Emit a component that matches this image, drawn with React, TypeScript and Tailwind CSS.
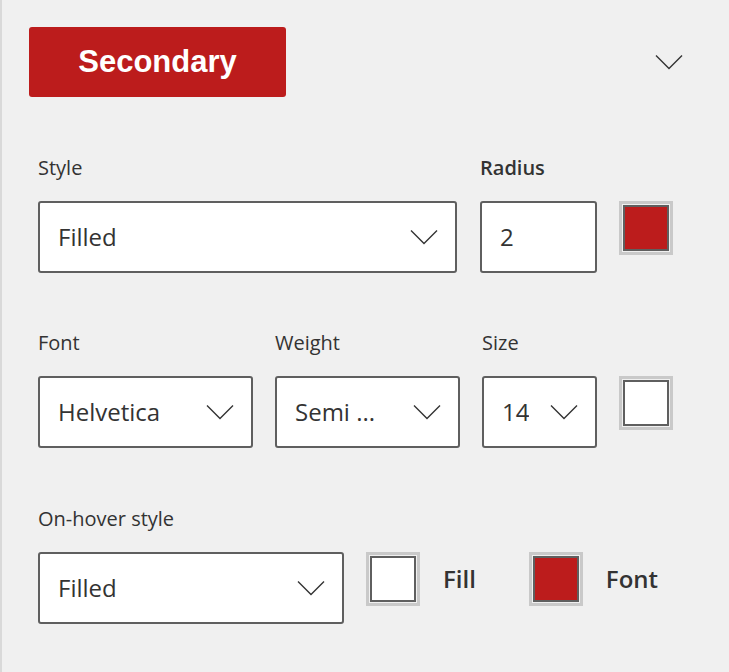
import type { ReactNode } from 'react';

const RED = '#bc1c1c';

function Chevron({ className = '' }: { className?: string }) {
  return (
    <svg width="28" height="16" viewBox="0 0 28 16" className={className} fill="none">
      <polyline points="1,1.5 14,14.5 27,1.5" stroke="#333" strokeWidth="1.35" />
    </svg>
  );
}

function Swatch({ color }: { color: string }) {
  return (
    <div className="w-[54px] h-[54px] shrink-0 border-[3px] border-[#c9c9c9] p-px">
      <div className="w-full h-full border-2 border-[#5f5f5f]" style={{ backgroundColor: color }} />
    </div>
  );
}

function Dropdown({ value, width }: { value: string; width: string }) {
  return (
    <div className={`${width} h-[72px] bg-white border-2 border-[#5f5f5f] rounded-[3px] flex items-center justify-between pl-[18px] pr-[17px]`}>
      <span className="text-[24px] text-[#333] truncate">{value}</span>
      <Chevron className="shrink-0" />
    </div>
  );
}

function Field({ label, bold, children }: { label: string; bold?: boolean; children: ReactNode }) {
  return (
    <div className="flex flex-col">
      <span className={`text-[20px] leading-[28px] text-[#333] ${bold ? 'font-semibold' : ''}`}>{label}</span>
      <div className="mt-[19px]">{children}</div>
    </div>
  );
}

export default function App() {
  return (
    <div className="min-h-screen bg-[#f0f0f0] border-l-2 border-[#d9d9d9] font-['Open_Sans',sans-serif] text-[#333]">
      <div className="pl-[27px] pr-[46px] pt-[27px] flex items-center justify-between">
        <button
          className="w-[257px] h-[70px] rounded-[3px] text-white font-bold text-[31px] font-['Liberation_Sans',Arial,sans-serif]"
          style={{ backgroundColor: RED }}
        >
          Secondary
        </button>
        <Chevron />
      </div>

      <div className="pl-[36px] pt-[57px]">
        {/* style + radius */}
        <div className="flex items-start gap-[23px]">
          <Field label="Style">
            <Dropdown value="Filled" width="w-[419px]" />
          </Field>
          <Field label="Radius" bold>
            <div className="w-[117px] h-[72px] bg-white border-2 border-[#5f5f5f] rounded-[3px] flex items-center pl-[18px]">
              <span className="text-[24px]">2</span>
            </div>
          </Field>
          <div className="pt-[47px] -ml-px">
            <Swatch color={RED} />
          </div>
        </div>

        {/* font settings */}
        <div className="flex items-start gap-[22px] mt-[56px]">
          <Field label="Font">
            <Dropdown value="Helvetica" width="w-[215px]" />
          </Field>
          <Field label="Weight">
            <Dropdown value="Semi ..." width="w-[185px]" />
          </Field>
          <Field label="Size">
            <Dropdown value="14" width="w-[115px]" />
          </Field>
          <div className="pt-[47px]">
            <Swatch color="#ffffff" />
          </div>
        </div>

        {/* hover */}
        <div className="mt-[57px]">
          <Field label="On-hover style">
            <div className="flex items-start">
              <Dropdown value="Filled" width="w-[306px]" />
              <div className="flex items-center ml-[22px]">
                <Swatch color="#ffffff" />
                <span className="ml-[23px] text-[24px] font-semibold">Fill</span>
              </div>
              <div className="flex items-center ml-[53px]">
                <Swatch color={RED} />
                <span className="ml-[23px] text-[24px] font-semibold">Font</span>
              </div>
            </div>
          </Field>
        </div>
      </div>
    </div>
  );
}
